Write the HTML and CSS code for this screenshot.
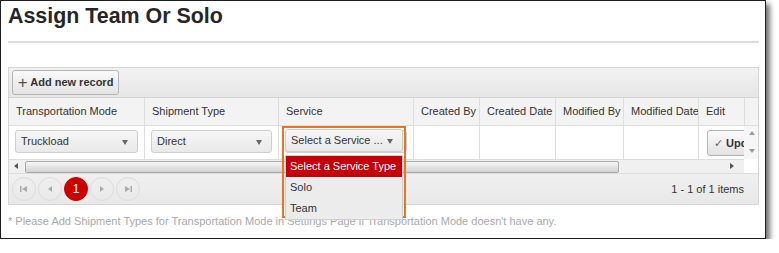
FILE: index.html
```html
<!DOCTYPE html>
<html lang="en-US">
<head>
  <meta charset="UTF-8">
  <title>Assign Team Or Solo</title>
  <link rel="stylesheet" href="styles.css">
</head>
<body>
  <div class="frame">
    <h1 class="title">Assign Team Or Solo</h1>
    <div class="rule"></div>

    <div class="grid">
      <div class="toolbar">
        <button class="btn add"><span class="plus">+</span> Add new record</button>
      </div>

      <div class="cols head">
        <div class="cell">Transportation Mode</div>
        <div class="cell">Shipment Type</div>
        <div class="cell">Service</div>
        <div class="cell">Created By</div>
        <div class="cell">Created Date</div>
        <div class="cell">Modified By</div>
        <div class="cell">Modified Date</div>
        <div class="cell">Edit</div>
        <div class="cell gutter"></div>
      </div>

      <div class="cols row">
        <div class="cell"><div class="select">Truckload<span class="caret"></span></div></div>
        <div class="cell"><div class="select">Direct<span class="caret"></span></div></div>
        <div class="cell"><div class="select">Select a Service ...<span class="caret"></span></div></div>
        <div class="cell"></div>
        <div class="cell"></div>
        <div class="cell"></div>
        <div class="cell"></div>
        <div class="cell edit"><button class="btn update"><span class="tick">&#10003;</span> Update</button></div>
        <div class="cell vscroll">
          <span class="arrow up"></span>
          <span class="arrow down"></span>
        </div>
      </div>

      <div class="hscroll">
        <span class="arrow left"></span>
        <div class="thumb"></div>
        <span class="arrow right"></span>
      </div>

      <div class="pager">
        <div class="pages">
          <span class="page">
            <svg width="8" height="8" viewBox="0 0 8 8"><rect x="0" y="1" width="1.5" height="6" fill="#aaa"/><path d="M7 1 L2 4 L7 7 Z" fill="#aaa"/></svg>
          </span>
          <span class="page">
            <svg width="8" height="8" viewBox="0 0 8 8"><path d="M6 1 L2 4 L6 7 Z" fill="#aaa"/></svg>
          </span>
          <span class="page current">1</span>
          <span class="page">
            <svg width="8" height="8" viewBox="0 0 8 8"><path d="M2 1 L6 4 L2 7 Z" fill="#aaa"/></svg>
          </span>
          <span class="page">
            <svg width="8" height="8" viewBox="0 0 8 8"><path d="M1 1 L6 4 L1 7 Z" fill="#aaa"/><rect x="6.5" y="1" width="1.5" height="6" fill="#aaa"/></svg>
          </span>
        </div>
        <div class="info">1 - 1 of 1 items</div>
      </div>

      <!-- open dropdown, with the orange callout round it -->
      <div class="callout">
        <div class="select">Select a Service ...<span class="caret"></span></div>
        <ul class="options">
          <li class="picked">Select a Service Type</li>
          <li>Solo</li>
          <li>Team</li>
        </ul>
      </div>
    </div>

    <p class="note">* Please Add Shipment Types for Transportation Mode in Settings Page if Transportation Mode doesn't have any.</p>
  </div>
</body>
</html>
```

FILE: styles.css
```css
body {
  background: #fff;
  font-family: "Liberation Sans", Arial, sans-serif;
  margin: 0;
}
.frame {
  background: #fff;
  border: 1px solid #1e1e1e;
  box-shadow: 4px 4px 5px rgba(0, 0, 0, 0.55);
  box-sizing: border-box;
  height: 239px;
  width: 766px;
}
.title {
  color: #262626;
  font-size: 21.4px;
  font-weight: bold;
  line-height: 24px;
  margin: 3px 0 0 7px;
}
.rule {
  background: #ddd;
  height: 2px;
  margin: 13px 6px 0 7px;
}

.grid {
  border: 1px solid #d5d5d5;
  box-sizing: border-box;
  margin: 24px 0 0 7px;
  position: relative;
  width: 751px;
}
.toolbar {
  background: linear-gradient(#f2f2f2, #e6e6e6);
  border-bottom: 1px solid #d5d5d5;
  box-sizing: border-box;
  height: 30px;
  padding: 2px 3px 0;
}
.btn {
  background: linear-gradient(#fafafa, #e3e3e3);
  border: 1px solid #b4b4b4;
  border-radius: 3px;
  color: #333;
  font-family: inherit;
  font-size: 11px;
  font-weight: bold;
  padding: 0 5px;
  white-space: nowrap;
}
.add {
  height: 25px;
  padding: 0 4px;
  width: 107px;
}
.plus {
  color: #555;
  font-size: 17px;
  font-weight: normal;
  line-height: 12px;
  vertical-align: -2px;
}

.cols {
  display: grid;
  grid-template-columns: 135px 134px 135px 66px 76px 68px 75px 46px 1fr;
}
.cell {
  border-left: 1px solid #ddd;
  box-sizing: border-box;
  overflow: hidden;
  white-space: nowrap;
}
.cell:first-child {
  border-left: none;
}
.head {
  background: #f3f3f3;
  border-bottom: 1px solid #ddd;
  color: #333;
  font-size: 11px;
  height: 27px;
}
.head .cell {
  line-height: 27px;
  padding-left: 7px;
}
.head .gutter {
  padding: 0;
}
.row {
  background: #fff;
  height: 33px;
}
.row .cell {
  padding: 4px 6px 0;
}
.select {
  background: linear-gradient(#f6f6f6, #e9e9e9);
  border: 1px solid #cfcfcf;
  border-radius: 3px;
  box-sizing: border-box;
  color: #333;
  font-size: 11px;
  height: 23px;
  line-height: 21px;
  padding: 0 0 0 5px;
  position: relative;
}
.caret {
  border-left: 3.5px solid transparent;
  border-right: 3.5px solid transparent;
  border-top: 5px solid #666;
  position: absolute;
  right: 9px;
  top: 9px;
}
.row .edit {
  padding: 4px 0 0 8px;
}
.update {
  height: 26px;
  padding: 0 6px;
}
.tick {
  color: #666;
  font-weight: normal;
}
.row .vscroll {
  background: #f6f6f6;
  border-left: none;
  padding: 0;
  position: relative;
}

.arrow {
  height: 0;
  position: absolute;
  width: 0;
}
.arrow.up {
  border-bottom: 4px solid #999;
  border-left: 3px solid transparent;
  border-right: 3px solid transparent;
  left: 5px;
  top: 5px;
}
.arrow.down {
  border-left: 3px solid transparent;
  border-right: 3px solid transparent;
  border-top: 4px solid #999;
  bottom: 6px;
  left: 5px;
}
.hscroll {
  background: #f0f0f0;
  border-top: 1px solid #ddd;
  box-sizing: border-box;
  height: 14px;
  padding: 1px 0 0 16px;
  position: relative;
  width: 735px;
}
.arrow.left {
  border-bottom: 3px solid transparent;
  border-right: 4px solid #555;
  border-top: 3px solid transparent;
  left: 5px;
  top: 3px;
}
.arrow.right {
  border-bottom: 3px solid transparent;
  border-left: 4px solid #555;
  border-top: 3px solid transparent;
  right: 10px;
  top: 3px;
}
.thumb {
  background: linear-gradient(#f6f6f6, #d2d2d2);
  border: 1px solid #a9a9a9;
  border-radius: 2px;
  box-sizing: border-box;
  height: 12px;
  width: 594px;
}

.pager {
  align-items: center;
  background: linear-gradient(#f0f0f0, #e8e8e8);
  border-top: 1px solid #ddd;
  box-sizing: border-box;
  display: flex;
  height: 31px;
  justify-content: space-between;
  padding: 0 14px 0 3px;
}
.pages {
  display: flex;
  gap: 2px;
}
.page {
  align-items: center;
  border: 1px solid #dcdcdc;
  border-radius: 50%;
  box-sizing: border-box;
  display: flex;
  height: 24px;
  justify-content: center;
  width: 24px;
}
.page.current {
  background: #c00;
  border-color: #c00;
  color: #fff;
  font-size: 12px;
}
.info {
  color: #333;
  font-size: 11px;
}

.callout {
  border: 2.5px solid #e8751f;
  box-sizing: border-box;
  height: 92px;
  left: 273px;
  padding: 1px;
  position: absolute;
  top: 58px;
  width: 124px;
}
.options {
  background: #ececec;
  border: 1px solid #d0d0d0;
  color: #333;
  font-size: 11px;
  list-style: none;
  margin: 3px 0 0;
  padding: 0;
}
.options li {
  height: 21px;
  line-height: 21px;
  padding-left: 4px;
}
.options .picked {
  background: #c4000a;
  color: #fff;
}

.note {
  color: #a9a9a9;
  font-size: 11px;
  margin: 10px 0 0 7px;
}
```
